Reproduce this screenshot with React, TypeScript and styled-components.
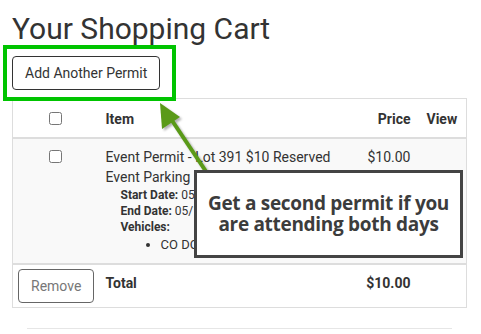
import styled, { createGlobalStyle } from 'styled-components';

const GlobalStyle = createGlobalStyle`
  html, body {
    margin: 0;
    padding: 0;
    background: #fff;
  }
  body {
    font-family: Roboto, 'Liberation Sans', sans-serif;
    color: #333;
  }
`;

export default function App() {
  return (
    <>
      <GlobalStyle />
      <Page>
        <Title>Your Shopping Cart</Title>
        <AddButton type='button'>Add Another Permit</AddButton>
        <CartTable>
          <colgroup>
            <col style={{ width: 85 }} />
            <col />
            <col style={{ width: 64 }} />
            <col style={{ width: 48 }} />
          </colgroup>
          <thead>
            <tr>
              <HeadCell $center>
                <Check type='checkbox' />
              </HeadCell>
              <HeadCell>Item</HeadCell>
              <HeadCell $right>Price</HeadCell>
              <HeadCell>View</HeadCell>
            </tr>
          </thead>
          <tbody>
            <BodyRow>
              <Cell $center>
                <Check type='checkbox' />
              </Cell>
              <Cell>
                Event Permit - Lot 391 $10 Reserved Event Parking
                <Details>
                  <DetailLine>
                    <Label>Start Date:</Label> 05/18/2024
                  </DetailLine>
                  <DetailLine>
                    <Label>End Date:</Label> 05/18/2024
                  </DetailLine>
                  <DetailLine>
                    <Label>Vehicles:</Label>
                  </DetailLine>
                  <Vehicles>
                    <li>CO DC 1234</li>
                  </Vehicles>
                </Details>
              </Cell>
              <Cell $right>$10.00</Cell>
              <Cell />
            </BodyRow>
          </tbody>
          <tfoot>
            <tr>
              <FootCell $tight>
                <RemoveButton type='button'>Remove</RemoveButton>
              </FootCell>
              <FootCell $bold>Total</FootCell>
              <FootCell $bold $right>
                $10.00
              </FootCell>
              <FootCell />
            </tr>
          </tfoot>
        </CartTable>
        <Divider />

        {/* annotation layer */}
        <Highlight />
        <Arrow width='80' height='100' viewBox='0 0 80 100'>
          <line x1='60' y1='88' x2='12' y2='16' stroke='#5a9a18' strokeWidth='4' />
          <polygon points='3,3 5,29 23,17' fill='#5a9a18' />
        </Arrow>
        <Callout>
          Get a second permit if you
          <br />
          are attending both days
        </Callout>
      </Page>
    </>
  );
}

const Page = styled.div`
  position: relative;
  width: 481px;
  height: 334px;
  padding: 12px 14px 0 12px;
  box-sizing: border-box;
  overflow: hidden;
`;

const Title = styled.h1`
  margin: 0;
  font-size: 30px;
  font-weight: 400;
  line-height: 33px;
  color: #333;
`;

const AddButton = styled.button`
  display: block;
  margin: 11px 0 8px;
  height: 34px;
  padding: 6px 12px;
  font-family: Roboto, 'Liberation Sans', sans-serif;
  font-size: 14px;
  line-height: 20px;
  color: #333;
  background: #fff;
  border: 1px solid #333;
  border-radius: 4px;
`;

const CartTable = styled.table`
  width: 455px;
  border-collapse: collapse;
  table-layout: fixed;
  border: 1px solid #ddd;
  font-size: 14px;
  line-height: 20px;
`;

const HeadCell = styled.th<{ $center?: boolean; $right?: boolean }>`
  padding: 10px 8px 8px;
  text-align: ${({ $center, $right }) => ($center ? 'center' : $right ? 'right' : 'left')};
  font-weight: 700;
  border-bottom: 2px solid #ddd;
  vertical-align: middle;
`;

const BodyRow = styled.tr`
  background: #f9f9f9;
`;

const Cell = styled.td<{ $center?: boolean; $right?: boolean }>`
  padding: 8px 8px 10px;
  vertical-align: top;
  text-align: ${({ $center, $right }) => ($center ? 'center' : $right ? 'right' : 'left')};
`;

const FootCell = styled.td<{ $tight?: boolean; $bold?: boolean; $right?: boolean }>`
  padding: ${({ $tight }) => ($tight ? '4px 5px 4px' : '8px')};
  vertical-align: top;
  border-top: 2px solid #ddd;
  font-weight: ${({ $bold }) => ($bold ? 700 : 400)};
  text-align: ${({ $right }) => ($right ? 'right' : 'left')};
`;

const Check = styled.input`
  width: 13px;
  height: 13px;
  margin: 3px 0 0;
  vertical-align: top;
`;

const Details = styled.div`
  padding-left: 15px;
  font-size: 12px;
  line-height: 16px;
`;

const DetailLine = styled.div``;

const Label = styled.b`
  font-weight: 700;
`;

const Vehicles = styled.ul`
  margin: 2px 0 0;
  padding-left: 40px;
  font-size: 13px;
  line-height: 16px;
`;

const RemoveButton = styled.button`
  height: 34px;
  padding: 6px 12px;
  font-family: Roboto, 'Liberation Sans', sans-serif;
  font-size: 14px;
  line-height: 20px;
  color: #777;
  background: #fff;
  border: 1px solid #666;
  border-radius: 4px;
`;

const Divider = styled.hr`
  margin: 20px 15px 0;
  border: 0;
  border-top: 1px solid #e6e6e6;
`;

const Highlight = styled.div`
  position: absolute;
  left: 3px;
  top: 45px;
  width: 173px;
  height: 56px;
  box-sizing: border-box;
  border: 4px solid #00c400;
`;

const Arrow = styled.svg`
  position: absolute;
  left: 157px;
  top: 100px;
  filter: drop-shadow(2px 2px 1px rgba(0, 0, 0, 0.3));
`;

const Callout = styled.div`
  position: absolute;
  left: 194px;
  top: 170px;
  width: 269px;
  height: 88px;
  box-sizing: border-box;
  border: 3px solid #444;
  background: #fff;
  display: flex;
  flex-direction: column;
  justify-content: center;
  align-items: center;
  text-align: center;
  font-family: 'Open Sans', 'Liberation Sans', sans-serif;
  font-weight: 700;
  font-size: 19px;
  line-height: 21px;
  letter-spacing: -0.3px;
  color: #3c3c3c;
`;
